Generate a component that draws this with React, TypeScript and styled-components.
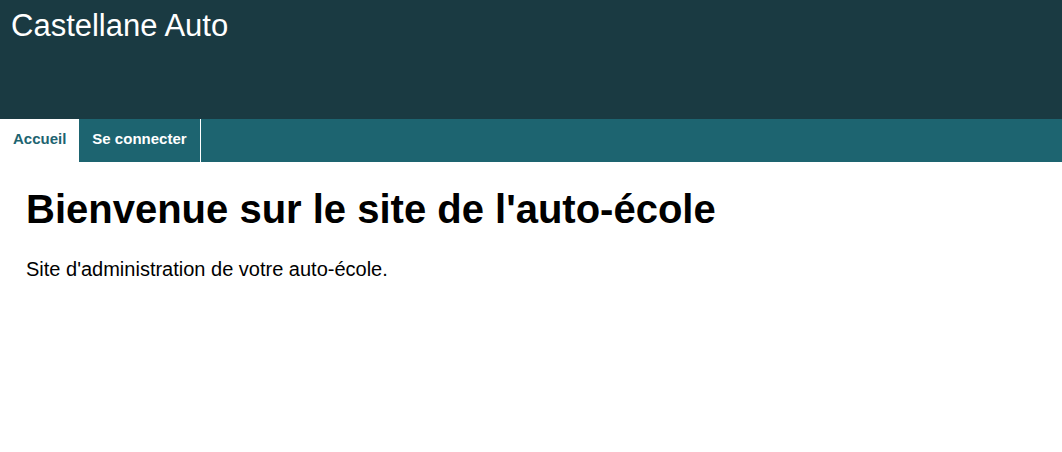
import React from "react";
import styled, { createGlobalStyle } from "styled-components";

const Global = createGlobalStyle`
  html, body { margin: 0; padding: 0; background: #fff; }
  body { font-family: "Liberation Sans", Arial, sans-serif; }
`;

const Header = styled.header`
  background: #1a3a42;
  height: 119px;
  box-sizing: border-box;
  padding: 8px 11px;
`;

const Title = styled.div`
  color: #fff;
  font-size: 31px;
  line-height: 36px;
`;

const Nav = styled.nav`
  display: flex;
  background: #1d6470;
  height: 43px;
`;

const Tab = styled.a<{ $active?: boolean }>`
  display: block;
  box-sizing: border-box;
  padding: 11px 13px 0;
  font-size: 15px;
  line-height: 17px;
  font-weight: bold;
  text-decoration: none;
  color: ${(p) => (p.$active ? "#1d6470" : "#fff")};
  background: ${(p) => (p.$active ? "#fff" : "transparent")};
  border-right: ${(p) => (p.$active ? "none" : "1px solid #fff")};
`;

const Main = styled.main`
  padding: 0 26px;
`;

const H1 = styled.h1`
  margin: 23px 0 0;
  font-size: 40px;
  line-height: 48px;
  font-weight: bold;
  color: #000;
`;

const P = styled.p`
  margin: 24px 0 0;
  font-size: 20px;
  line-height: 24px;
  color: #000;
`;

export default function App() {
  return (
    <>
      <Global />
      <Header>
        <Title>Castellane Auto</Title>
      </Header>
      <Nav>
        <Tab $active href="#">Accueil</Tab>
        <Tab href="#">Se connecter</Tab>
      </Nav>
      <Main>
        <H1>Bienvenue sur le site de l'auto-école</H1>
        <P>Site d'administration de votre auto-école.</P>
      </Main>
    </>
  );
}
